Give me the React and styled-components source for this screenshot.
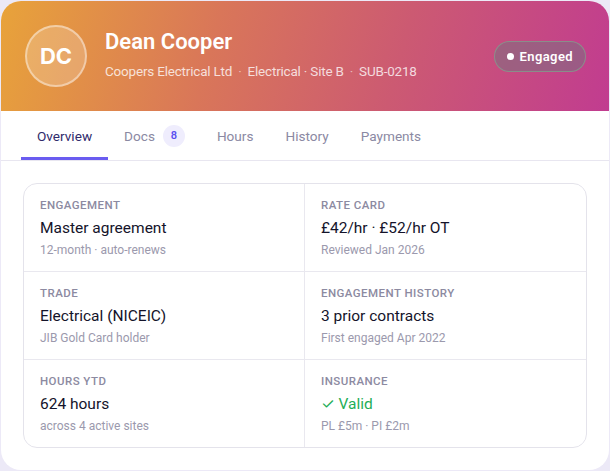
import React from 'react';
import styled, { createGlobalStyle } from 'styled-components';

const GlobalStyle = createGlobalStyle`
  html, body {
    margin: 0;
    padding: 0;
    background: #ece9f7;
    font-family: Roboto, Inter, "Noto Sans", sans-serif;
  }
  * { box-sizing: border-box; }
`;

const Card = styled.div`
  margin: 1px;
  width: 608px;
  height: 469px;
  background: #ffffff;
  border-radius: 20px;
  overflow: hidden;
  display: flex;
  flex-direction: column;
`;

const Header = styled.header`
  height: 110px;
  display: flex;
  align-items: center;
  padding: 0 23px 0 24px;
  background: linear-gradient(105deg, #e8a33a 0%, #d97659 35%, #cc5a72 65%, #c13c90 100%);
`;

const Avatar = styled.div`
  width: 62px;
  height: 62px;
  border-radius: 50%;
  background: rgba(255, 255, 255, 0.2);
  border: 2px solid rgba(255, 255, 255, 0.42);
  display: flex;
  align-items: center;
  justify-content: center;
  color: #fff;
  font-family: Inter, sans-serif;
  font-size: 22px;
  font-weight: 700;
  flex-shrink: 0;
`;

const Identity = styled.div`
  margin-left: 18px;
  flex: 1;
  display: flex;
  flex-direction: column;
  gap: 5px;
  margin-top: -4px;
`;

const Name = styled.h1`
  margin: 0;
  font-size: 22px;
  font-weight: 600;
  color: #fff;
  line-height: 28px;
`;

const Meta = styled.div`
  display: flex;
  align-items: center;
  font-size: 13.5px;
  letter-spacing: -0.2px;
  color: rgba(255, 255, 255, 0.78);
  line-height: 20px;
`;

const Sep = styled.span`
  margin: 0 6px;
  opacity: 0.7;
`;

const Badge = styled.div`
  display: flex;
  align-items: center;
  gap: 6px;
  height: 31px;
  padding: 0 12px 0 12px;
  border-radius: 16px;
  background: rgba(115, 115, 128, 0.5);
  border: 1px solid rgba(135, 150, 140, 0.85);
  color: #fff;
  font-size: 13px;
  font-weight: 600;
  letter-spacing: 0.4px;
`;

const Dot = styled.span`
  width: 7px;
  height: 7px;
  border-radius: 50%;
  background: #fff;
`;

const Tabs = styled.nav`
  display: flex;
  padding: 0 20px;
  height: 50px;
  border-bottom: 1px solid #e8e6f0;
`;

const Tab = styled.div`
  display: flex;
  align-items: center;
  gap: 8px;
  padding: 3px 16px 0;
  font-size: 13.6px;
  color: ${p => (p.$active ? '#2f2a6b' : '#8b89a3')};
  border-bottom: 3px solid ${p => (p.$active ? '#6a5cf0' : 'transparent')};
`;

const Count = styled.span`
  width: 22px;
  height: 22px;
  border-radius: 50%;
  background: #efedfd;
  color: #5b4ff0;
  font-size: 11px;
  font-weight: 600;
  display: flex;
  align-items: center;
  justify-content: center;
`;

const Body = styled.main`
  flex: 1;
  padding: 22px;
`;

const Grid = styled.div`
  display: grid;
  grid-template-columns: 1fr 1fr;
  border: 1px solid #e4e3eb;
  border-radius: 14px;
  overflow: hidden;
  height: 100%;
`;

const Cell = styled.div`
  padding: 13px 16px 0 16px;
  border-right: ${p => (p.$left ? '1px solid #e9e8ef' : 'none')};
  border-bottom: ${p => (p.$last ? 'none' : '1px solid #e9e8ef')};
  display: flex;
  flex-direction: column;
`;

const Label = styled.div`
  font-size: 11.5px;
  font-weight: 500;
  letter-spacing: 0.45px;
  color: #8c8aa1;
  text-transform: uppercase;
  line-height: 16px;
`;

const Value = styled.div`
  margin-top: 4px;
  font-size: 15.5px;
  font-weight: 400;
  color: ${p => (p.$ok ? '#1fae57' : '#14132a')};
  line-height: 22px;
`;

const Sub = styled.div`
  margin-top: 2px;
  font-size: 12px;
  color: #9b99ad;
  line-height: 18px;
`;

const fields = [
  { label: 'Engagement', value: 'Master agreement', sub: '12-month · auto-renews' },
  { label: 'Rate card', value: '£42/hr · £52/hr OT', sub: 'Reviewed Jan 2026' },
  { label: 'Trade', value: 'Electrical (NICEIC)', sub: 'JIB Gold Card holder' },
  { label: 'Engagement history', value: '3 prior contracts', sub: 'First engaged Apr 2022' },
  { label: 'Hours YTD', value: '624 hours', sub: 'across 4 active sites' },
  { label: 'Insurance', value: '✓ Valid', sub: 'PL £5m · PI £2m', ok: true },
];

const tabs = ['Overview', 'Docs', 'Hours', 'History', 'Payments'];

export default function App() {
  return (
    <>
      <GlobalStyle />
      <Card>
        <Header>
          <Avatar>DC</Avatar>
          <Identity>
            <Name>Dean Cooper</Name>
            <Meta>
              <span>Coopers Electrical Ltd</span>
              <Sep>·</Sep>
              <span>Electrical · Site B</span>
              <Sep>·</Sep>
              <span>SUB-0218</span>
            </Meta>
          </Identity>
          <Badge>
            <Dot />
            Engaged
          </Badge>
        </Header>
        <Tabs>
          {tabs.map((t, i) => (
            <Tab key={t} $active={i === 0}>
              {t}
              {t === 'Docs' && <Count>8</Count>}
            </Tab>
          ))}
        </Tabs>
        <Body>
          <Grid>
            {fields.map((f, i) => (
              <Cell key={f.label} $left={i % 2 === 0} $last={i >= 4}>
                <Label>{f.label}</Label>
                <Value $ok={f.ok}>{f.value}</Value>
                <Sub>{f.sub}</Sub>
              </Cell>
            ))}
          </Grid>
        </Body>
      </Card>
    </>
  );
}
